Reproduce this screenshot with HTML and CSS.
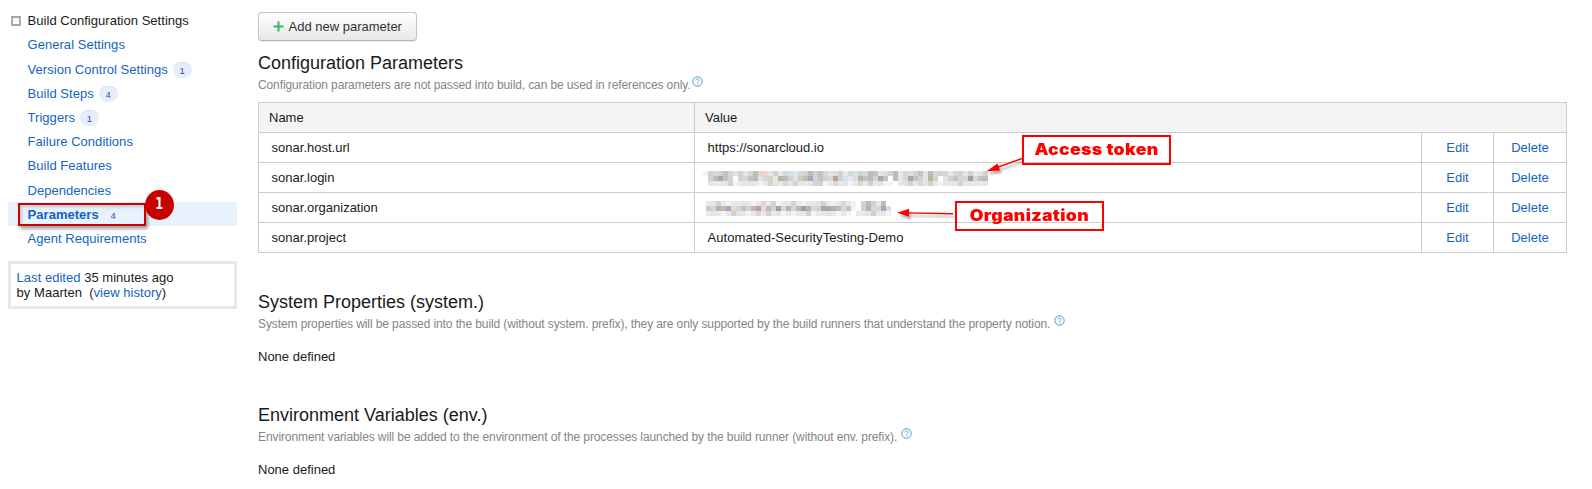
FILE: index.html
```html
<!DOCTYPE html>
<html lang="en">
<head>
<meta charset="utf-8">
<title>Build Configuration Settings</title>
<link rel="stylesheet" href="styles.css">
</head>
<body>
<svg width="0" height="0" class="defs">
  <symbol id="help" viewBox="0 0 11 11"><circle cx="5.5" cy="5.5" r="4.7" fill="none" stroke="#4399cc" stroke-width="1"/><path d="M3.9 4.4C3.9 2.4 7.1 2.5 7.1 4.3C7.1 5.4 5.5 5.3 5.5 6.6M5.5 7.4V8.4" fill="none" stroke="#5aa5d4" stroke-width="1"/></symbol>
</svg>
<div class="page">
  <aside class="sidebar">
    <nav class="nav">
      <div class="item title"><span class="square"></span>Build Configuration Settings</div>
      <a class="item">General Settings</a>
      <a class="item gap">Version Control Settings<span class="count">1</span></a>
      <a class="item">Build Steps<span class="count">4</span></a>
      <a class="item">Triggers<span class="count">1</span></a>
      <a class="item">Failure Conditions</a>
      <a class="item">Build Features</a>
      <a class="item gap">Dependencies</a>
      <a class="item active"><b>Parameters</b><span class="count">4</span><span class="mark"></span><span class="step"><span>1</span></span></a>
      <a class="item">Agent Requirements</a>
    </nav>
    <div class="edited"><a>Last edited</a> 35 minutes ago<br>by Maarten &nbsp;(<a>view history</a>)</div>
  </aside>
  <main class="content">
    <button class="add"><svg width="11" height="11" viewBox="0 0 11 11"><path d="M5.5 .5V10.5M.5 5.5H10.5" stroke="#3fb561" stroke-width="2"/></svg><span>Add new parameter</span></button>
    <section class="section">
      <h2>Configuration Parameters</h2>
      <p class="desc first"><span>Configuration parameters are not passed into build, can be used in references only.</span><svg class="help"><use href="#help"/></svg></p>
      <div class="table">
        <div class="cell head">Name</div><div class="cell head wide">Value</div>
        <div class="cell">sonar.host.url</div><div class="cell">https://sonarcloud.io</div><a class="cell act">Edit</a><a class="cell act">Delete</a>
        <div class="cell">sonar.login</div><div class="cell"><svg class="mosaic token" id="token"></svg></div><a class="cell act">Edit</a><a class="cell act">Delete</a>
        <div class="cell">sonar.organization</div><div class="cell"><svg class="mosaic org" id="org"></svg></div><a class="cell act">Edit</a><a class="cell act">Delete</a>
        <div class="cell">sonar.project</div><div class="cell demo">Automated-SecurityTesting-Demo</div><a class="cell act">Edit</a><a class="cell act">Delete</a>
      </div>
    </section>
    <section class="section system">
      <h2>System Properties (system.)</h2>
      <p class="desc spaced"><span>System properties will be passed into the build (without system. prefix), they are only supported by the build runners that understand the property notion.</span><svg class="help"><use href="#help"/></svg></p>
      <p class="none">None defined</p>
    </section>
    <section class="section env">
      <h2>Environment Variables (env.)</h2>
      <p class="desc spaced"><span>Environment variables will be added to the environment of the processes launched by the build runner (without env. prefix).</span><svg class="help"><use href="#help"/></svg></p>
      <p class="none">None defined</p>
    </section>
  </main>
  <svg class="arrows" width="200" height="90" viewBox="880 140 200 90">
    <g stroke="#f00" stroke-width="1.4" fill="#f00">
      <path d="M1022 158.500L994 168.500"/><path d="M986.500 171.200L997.500 163.500L1000 170.500Z" stroke="none"/>
      <path d="M953 213.800L906 212.900"/><path d="M897 212.700L909 208.800V216.800Z" stroke="none"/>
    </g>
  </svg>
  <div class="label access"><span>Access token</span></div>
  <div class="label organization"><span>Organization</span></div>
</div>
<script src="mosaic.js"></script>
</body>
</html>
```
FILE: styles.css
```css
body { margin: 0; background: #fff; color: #1a1a1a; font: 13px/15px "Liberation Sans", Arial, sans-serif; }
.defs { position: absolute; }
.page { position: relative; display: flex; width: 1592px; height: 489px; overflow: hidden; }
a { color: #1564c0; }
h2, p { margin: 0; }
.sidebar { width: 229px; padding: 8px 21px 0 8px; flex: none; }
.item { display: flex; align-items: center; box-sizing: border-box; height: 24px; padding: 1px 0 0 19.6px; position: relative; white-space: nowrap; letter-spacing: .03px; }
.item.title { padding-left: 3px; }
.gap { margin-top: 1px; }
.square { box-sizing: border-box; width: 10px; height: 10px; border: 2px solid #a9a9a9; margin-right: 6.6px; }
.count { width: 19px; height: 15px; margin-left: 5px; border-radius: 9px; background: #e6eff9; border-top: 1px solid #d3e1f0; font-size: 9.5px; color: #3d4fa6; text-align: center; line-height: 15px; }
.active { background: #e8f2fd; }
.active .count { border-color: #d9e5f2; background: #e8f2fd; }
.mark { position: absolute; left: 10px; top: 1px; width: 124px; height: 19px; border: 2px solid #c00; box-shadow: 2px 3px 3px rgba(0,0,0,.35), inset 2px 2px 3px rgba(0,0,0,.16); }
.step { position: absolute; left: 137px; top: -12px; width: 29px; height: 30px; border-radius: 50%; background: #c90000; color: #fff; font: bold 15px/29px "DejaVu Sans", sans-serif; text-align: center; }
.step span { display: inline-block; transform: scaleX(.75); }
.edited { margin-top: 11px; height: 30px; padding: 6px 6px 6px 5.6px; border: 3px solid #e4e9f1; white-space: nowrap; letter-spacing: .03px; }
.content { width: 1309px; padding-top: 12px; }
.add { display: flex; align-items: center; gap: 5px; box-sizing: border-box; width: 159px; height: 29px; margin: 0 0 12px; padding: 0 0 0 13.500px; border: 1px solid #c5c5c5; border-bottom-color: #b5b5b5; border-radius: 4px; background: linear-gradient(#fff, #e8e8e8); box-shadow: 0 1px 1px rgba(0,0,0,.08); font: 13px/15px "Liberation Sans", Arial, sans-serif; color: #333; }
h2 { font-size: 18px; line-height: 20px; font-weight: normal; }
.desc { display: flex; height: 14px; margin: 5px 0 10px; font-size: 12px; line-height: 14px; color: #858585; white-space: nowrap; letter-spacing: -.1px; }
.first { letter-spacing: -.115px; }
.help { width: 11px; height: 11px; margin: -2.500px 0 0 1px; }
.spaced { margin-bottom: 18px; }
.spaced .help { margin-left: 4px; }
.table { display: grid; grid-template-columns: 435px 726px 71px 72px; grid-auto-rows: 29px; gap: 1px; padding: 1px; background: #ccc; }
.cell { display: flex; align-items: center; padding-left: 12.6px; background: #fff; }
.head { padding-left: 10px; background: #f4f4f4; }
.demo { letter-spacing: .05px; }
.wide { grid-column: span 3; }
.act { justify-content: center; padding: 0; }
.mosaic { display: block; height: 15px; margin-top: 1px; opacity: .85; }
.token { width: 285px; margin-left: -4.6px; }
.org { width: 185px; margin-left: -1.6px; }
.system { margin-top: 39px; }
.env { margin-top: 41px; }
.arrows { position: absolute; left: 880px; top: 140px; filter: drop-shadow(2px 3px 1px rgba(0,0,0,.3)); }
.label { position: absolute; box-sizing: border-box; width: 149px; height: 30px; border: 2px solid #f00; color: #f00; font: 900 15.5px/26px Inter, sans-serif; text-align: center; white-space: nowrap; }
.label span { display: inline-block; letter-spacing: .3px; transform: scaleX(1.14); }
.access { left: 1022px; top: 135px; }
.organization { left: 955px; top: 201px; }
```
FILE: mosaic.js
```js
const palette = {
  a: '#f6f0ee', b: '#e6e5e3', c: '#cbcbca', d: '#b3b0ae', e: '#a1979b', f: '#c8d3d2',
  g: '#d8d0cb', h: '#9796b8', i: '#b5a58f', j: '#ead0c4', k: '#cbdcee', l: '#dbe1e4',
  m: '#beb7b8', n: '#84979a', o: '#c3c5b2', w: '#ffffff'
};
const blocks = {
  token: [
    'acgcmflclfdgjlcbfklgcdcmglkcbfkcgdmlkcdbfkcmldgcfbgclcblc',
    'wcdemcwcfmdlgcbidclodhcmcgeckbkimdcemwdbgemclicwlcmfgnfmd',
    'wlbblcabblbabclbglcbblccabgblabgbcblaawblcbglcbabblcblbbl'
  ],
  org: [
    'blcbabblbabgbcabbcbabblcbabgbawcdcbdw',
    'ofidhjfmcdejdcnfifdnigcheidfmawcigfhk',
    'blbabclbabgbcblababbcabblbabawbblcbba'
  ]
};
// Each block is 5px wide; rows are 5px high.
for (const id in blocks) {
  const svg = document.getElementById(id);
  blocks[id].forEach((row, y) => [...row].forEach((key, x) => {
    const r = document.createElementNS('http://www.w3.org/2000/svg', 'rect');
    r.setAttribute('x', x * 5);
    r.setAttribute('y', y * 5);
    r.setAttribute('width', 5);
    r.setAttribute('height', 5);
    r.setAttribute('fill', palette[key]);
    svg.appendChild(r);
  }));
}
```
